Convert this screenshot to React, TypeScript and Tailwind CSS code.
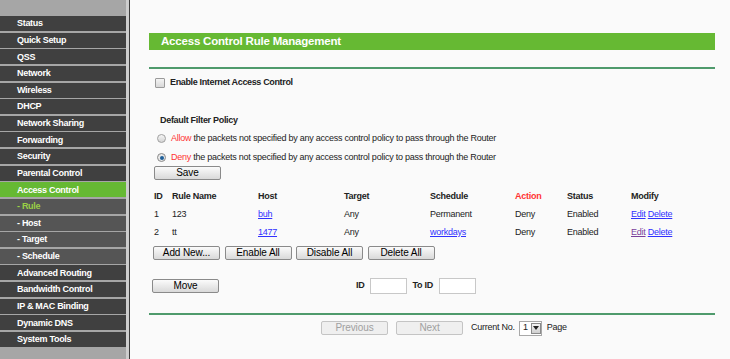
import React from 'react';

const menu: { label: string; kind?: 'active' | 'sub' | 'subActive' }[] = [
  { label: 'Status' },
  { label: 'Quick Setup' },
  { label: 'QSS' },
  { label: 'Network' },
  { label: 'Wireless' },
  { label: 'DHCP' },
  { label: 'Network Sharing' },
  { label: 'Forwarding' },
  { label: 'Security' },
  { label: 'Parental Control' },
  { label: 'Access Control', kind: 'active' },
  { label: '- Rule', kind: 'subActive' },
  { label: '- Host', kind: 'sub' },
  { label: '- Target', kind: 'sub' },
  { label: '- Schedule', kind: 'sub' },
  { label: 'Advanced Routing' },
  { label: 'Bandwidth Control' },
  { label: 'IP & MAC Binding' },
  { label: 'Dynamic DNS' },
  { label: 'System Tools' },
];

const rules = [
  { id: 1, name: '123', host: 'buh', target: 'Any', schedule: 'Permanent', scheduleLink: false, visited: false },
  { id: 2, name: 'tt', host: '1477', target: 'Any', schedule: 'workdays', scheduleLink: true, visited: true },
];

const Btn = ({ children, w = 'w-[67px]', disabled = false }: { children: React.ReactNode; w?: string; disabled?: boolean }) => (
  <button
    className={`${w} h-[14px] rounded-[2px] border text-[10px] leading-[12px] tracking-[-0.1px] ${
      disabled
        ? 'border-[#c4c4c4] bg-[#efefef] text-[#a0a0a0]'
        : 'border-[#8a8a8a] bg-gradient-to-b from-[#fbfbfb] to-[#d9d9d9] text-black'
    }`}
  >
    {children}
  </button>
);

const Sidebar = () => (
  <div className="flex h-full">
    <div className="w-[126px] h-full bg-[#a6a6a6] pt-[16px] flex flex-col gap-[1.63px]">
      {menu.map((m) => {
        let cls = 'bg-[#404040] text-white';
        if (m.kind === 'active') cls = 'bg-[#66b933] text-white';
        if (m.kind === 'sub') cls = 'bg-[#555555] text-white';
        if (m.kind === 'subActive') cls = 'bg-[#555555] text-[#9ad045]';
        return (
          <div
            key={m.label}
            className={`h-[15px] pl-[17px] pt-[1px] flex items-center text-[9px] font-bold tracking-[-0.3px] ${cls}`}
          >
            {m.label}
          </div>
        );
      })}
    </div>
    <div className="w-[3px] h-full bg-[#cdcdcd]" />
    <div className="w-[1px] h-full bg-[#3c3c3c]" />
  </div>
);

export default function App() {
  return (
    <div
      className="w-[730px] h-[359px] flex bg-[#fafafa] text-[#222] overflow-hidden"
      style={{ fontFamily: '"Liberation Sans", Arial, sans-serif' }}
    >
      <Sidebar />
      <div className="flex-1 pl-[19px] pr-[15px] pt-[33px] text-[9px] tracking-[-0.25px]">
        <div className="h-[17px] bg-[#66b933] text-white font-bold text-[11.5px] tracking-[-0.2px] pl-[12px] flex items-center">
          Access Control Rule Management
        </div>
        <div className="h-[2px] bg-[#4f9a6c] mt-[17px]" />

        <div className="flex items-center mt-[8px] ml-[6px] h-[12px]">
          <span className="w-[10px] h-[10px] border border-[#9a9a9a] bg-gradient-to-b from-[#f4f4f4] to-[#d8d8d8] rounded-[1px]" />
          <span className="ml-[5px] font-bold tracking-[-0.35px]">Enable Internet Access Control</span>
        </div>

        <div className="mt-[25px] ml-[11px] font-bold h-[13px] leading-[13px] tracking-[-0.3px]">Default Filter Policy</div>

        <div className="flex items-center mt-[5px] ml-[8px] h-[13px]">
          <span className="w-[9px] h-[9px] rounded-full border border-[#a0a0a0] bg-gradient-to-b from-[#f6f6f6] to-[#d4d4d4]" />
          <span className="ml-[5px]">
            <span className="text-[#ff3333]">Allow</span> the packets not specified by any access control policy to pass through the Router
          </span>
        </div>
        <div className="flex items-center mt-[6px] ml-[8px] h-[13px]">
          <span className="w-[9px] h-[9px] rounded-full border border-[#8a8a8a] bg-[#e8e8e8] flex items-center justify-center">
            <span className="w-[4px] h-[4px] rounded-full bg-[#1f5f99]" />
          </span>
          <span className="ml-[5px]">
            <span className="text-[#ff3333]">Deny</span> the packets not specified by any access control policy to pass through the Router
          </span>
        </div>

        <div className="mt-[2px] ml-[5px]">
          <Btn>Save</Btn>
        </div>

        <div className="ml-[5px] mt-[7px]">
          <div className="grid grid-cols-[18px_86px_86px_86px_85px_52px_64px_1fr] h-[18px] items-center font-bold">
            <span>ID</span>
            <span>Rule Name</span>
            <span>Host</span>
            <span>Target</span>
            <span>Schedule</span>
            <span className="text-[#ff3333]">Action</span>
            <span>Status</span>
            <span>Modify</span>
          </div>
          {rules.map((r) => (
            <div key={r.id} className="grid grid-cols-[18px_86px_86px_86px_85px_52px_64px_1fr] h-[18px] items-center">
              <span>{r.id}</span>
              <span>{r.name}</span>
              <span className="text-[#3030ff] underline">{r.host}</span>
              <span>{r.target}</span>
              <span className={r.scheduleLink ? 'text-[#3030ff] underline' : ''}>{r.schedule}</span>
              <span>Deny</span>
              <span>Enabled</span>
              <span>
                <span className={`${r.visited ? 'text-[#7a3f9a]' : 'text-[#3030ff]'} underline`}>Edit</span>{' '}
                <span className="text-[#3030ff] underline">Delete</span>
              </span>
            </div>
          ))}
        </div>

        <div className="flex gap-[4.5px] ml-[4px] mt-[4px]">
          <Btn>Add New...</Btn>
          <Btn>Enable All</Btn>
          <Btn>Disable All</Btn>
          <Btn>Delete All</Btn>
        </div>

        <div className="flex items-center mt-[18px] ml-[3px] h-[16px]">
          <Btn>Move</Btn>
          <span className="ml-[137px] font-bold">ID</span>
          <span className="ml-[5px] w-[37px] h-[16px] border border-[#c8c8c8] bg-white" />
          <span className="ml-[6px] font-bold">To ID</span>
          <span className="ml-[6px] w-[37px] h-[16px] border border-[#c8c8c8] bg-white" />
        </div>

        <div className="h-[2px] bg-[#4f9a6c] mt-[19px]" />

        <div className="flex items-center mt-[6px] ml-[172px] h-[15px]">
          <Btn disabled>Previous</Btn>
          <span className="ml-[8px]">
            <Btn disabled>Next</Btn>
          </span>
          <span className="ml-[8px]">Current No.</span>
          <span className="ml-[4px] w-[23px] h-[15px] border border-[#a8a8a8] bg-white flex items-center">
            <span className="w-[11px] text-center">1</span>
            <span className="w-[10px] h-[11px] border border-[#8a8a8a] bg-gradient-to-b from-[#f4f4f4] to-[#cfcfcf] flex items-center justify-center">
              <svg width="6" height="4" viewBox="0 0 6 4">
                <path d="M0 0h6L3 4z" fill="#222" />
              </svg>
            </span>
          </span>
          <span className="ml-[5px]">Page</span>
        </div>
      </div>
    </div>
  );
}
